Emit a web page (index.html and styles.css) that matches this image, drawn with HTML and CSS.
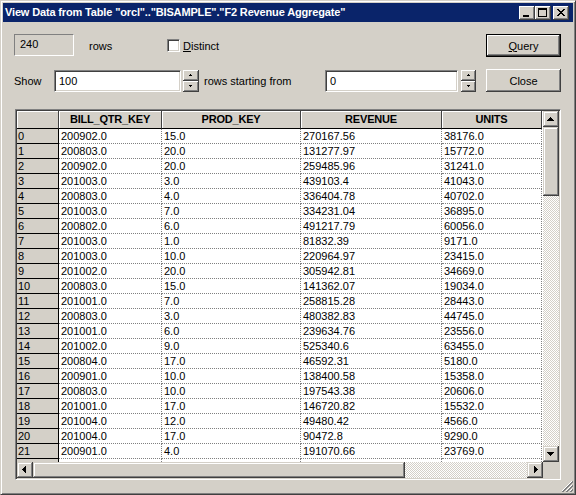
FILE: index.html
```html
<!DOCTYPE html>
<html>
<head>
<meta charset="utf-8">
<title>View Data</title>
<link rel="stylesheet" href="styles.css">
</head>
<body>
<div class="window">
  <div class="titlebar">
    <span class="title">View Data from Table "orcl".."BISAMPLE"."F2 Revenue Aggregate"</span>
    <div class="tbtns">
      <span class="tbtn"><svg width="16" height="14" viewBox="0 0 16 14"><rect x="4" y="9" width="6" height="2" fill="#000"/></svg></span>
      <span class="tbtn"><svg width="16" height="14" viewBox="0 0 16 14"><path d="M3 2h9v9H3z M4 4v6h7V4z" fill="#000" fill-rule="evenodd"/></svg></span>
      <span class="tbtn close"><svg width="16" height="14" viewBox="0 0 16 14"><path d="M4 3h2v1h1v1h2V4h1V3h2v1h-1v1h-1v1h-1v1h1v1h1v1h1v1h-2V9H9V8H7v1H6v1H4V9h1V8h1V7h1V6H6V5H5V4H4z" fill="#000"/></svg></span>
    </div>
  </div>

  <div class="controls">
    <div class="row">
      <div class="static">240</div>
      <span class="lbl-rows">rows</span>
      <span class="check"></span>
      <span class="chk-label"><u>D</u>istinct</span>
      <span class="spacer"></span>
      <div class="btn default"><span><u>Q</u>uery</span></div>
    </div>
    <div class="row">
      <span class="lbl-show">Show</span>
      <div class="field f1">100</div>
      <div class="spin s1">
        <span class="sp"><svg width="16" height="11" viewBox="0 0 16 11"><path d="M7 4h1v1h1v1H6V5h1z" fill="#000"/></svg></span>
        <span class="sp"><svg width="16" height="11" viewBox="0 0 16 11"><path d="M6 4h3v1H8v1H7V5H6z" fill="#000"/></svg></span>
      </div>
      <span class="lbl-from">rows starting from</span>
      <div class="field f2">0</div>
      <div class="spin s2">
        <span class="sp"><svg width="15" height="11" viewBox="0 0 15 11"><path d="M7 4h1v1h1v1H6V5h1z" fill="#000"/></svg></span>
        <span class="sp"><svg width="15" height="11" viewBox="0 0 15 11"><path d="M6 4h3v1H8v1H7V5H6z" fill="#000"/></svg></span>
      </div>
      <span class="spacer"></span>
      <div class="btn"><span>Close</span></div>
    </div>
  </div>

  <div class="frame">
    <div class="viewport">
      <div class="grid">
        <div class="hc"></div><div class="hc">BILL_QTR_KEY</div><div class="hc">PROD_KEY</div><div class="hc">REVENUE</div><div class="hc">UNITS</div>
        <div class="rh">0</div><div class="c">200902.0</div><div class="c">15.0</div><div class="c">270167.56</div><div class="c">38176.0</div>
        <div class="rh">1</div><div class="c">200803.0</div><div class="c">20.0</div><div class="c">131277.97</div><div class="c">15772.0</div>
        <div class="rh">2</div><div class="c">200902.0</div><div class="c">20.0</div><div class="c">259485.96</div><div class="c">31241.0</div>
        <div class="rh">3</div><div class="c">201003.0</div><div class="c">3.0</div><div class="c">439103.4</div><div class="c">41043.0</div>
        <div class="rh">4</div><div class="c">200803.0</div><div class="c">4.0</div><div class="c">336404.78</div><div class="c">40702.0</div>
        <div class="rh">5</div><div class="c">201003.0</div><div class="c">7.0</div><div class="c">334231.04</div><div class="c">36895.0</div>
        <div class="rh">6</div><div class="c">200802.0</div><div class="c">6.0</div><div class="c">491217.79</div><div class="c">60056.0</div>
        <div class="rh">7</div><div class="c">201003.0</div><div class="c">1.0</div><div class="c">81832.39</div><div class="c">9171.0</div>
        <div class="rh">8</div><div class="c">201003.0</div><div class="c">10.0</div><div class="c">220964.97</div><div class="c">23415.0</div>
        <div class="rh">9</div><div class="c">201002.0</div><div class="c">20.0</div><div class="c">305942.81</div><div class="c">34669.0</div>
        <div class="rh">10</div><div class="c">200803.0</div><div class="c">15.0</div><div class="c">141362.07</div><div class="c">19034.0</div>
        <div class="rh">11</div><div class="c">201001.0</div><div class="c">7.0</div><div class="c">258815.28</div><div class="c">28443.0</div>
        <div class="rh">12</div><div class="c">200803.0</div><div class="c">3.0</div><div class="c">480382.83</div><div class="c">44745.0</div>
        <div class="rh">13</div><div class="c">201001.0</div><div class="c">6.0</div><div class="c">239634.76</div><div class="c">23556.0</div>
        <div class="rh">14</div><div class="c">201002.0</div><div class="c">9.0</div><div class="c">525340.6</div><div class="c">63455.0</div>
        <div class="rh">15</div><div class="c">200804.0</div><div class="c">17.0</div><div class="c">46592.31</div><div class="c">5180.0</div>
        <div class="rh">16</div><div class="c">200901.0</div><div class="c">10.0</div><div class="c">138400.58</div><div class="c">15358.0</div>
        <div class="rh">17</div><div class="c">200803.0</div><div class="c">10.0</div><div class="c">197543.38</div><div class="c">20606.0</div>
        <div class="rh">18</div><div class="c">201001.0</div><div class="c">17.0</div><div class="c">146720.82</div><div class="c">15532.0</div>
        <div class="rh">19</div><div class="c">201004.0</div><div class="c">12.0</div><div class="c">49480.42</div><div class="c">4566.0</div>
        <div class="rh">20</div><div class="c">201004.0</div><div class="c">17.0</div><div class="c">90472.8</div><div class="c">9290.0</div>
        <div class="rh">21</div><div class="c">200901.0</div><div class="c">4.0</div><div class="c">191070.66</div><div class="c">23769.0</div>
        <div class="rh"></div><div class="c"></div><div class="c"></div><div class="c"></div><div class="c"></div>
      </div>
    </div>
    <div class="vscroll">
      <span class="sbtn"><svg width="16" height="16" viewBox="0 0 16 16"><path d="M7 6h1v1h1v1h1v1h1v1H4V9h1V8h1V7h1z" fill="#000"/></svg></span>
      <span class="thumb vthumb"></span>
      <span class="track"></span>
      <span class="sbtn"><svg width="16" height="16" viewBox="0 0 16 16"><path d="M4 6h7v1h-1v1h-1v1h-1v1H7V9H6V8H5V7H4z" fill="#000"/></svg></span>
    </div>
    <div class="hscroll">
      <span class="sbtn"><svg width="16" height="16" viewBox="0 0 16 16"><path d="M8 4h1v7h-1v-1h-1v-1h-1v-1h-1v-1h1v-1h1v-1h1z" fill="#000"/></svg></span>
      <span class="thumb hthumb"></span>
      <span class="track"></span>
      <span class="sbtn"><svg width="16" height="16" viewBox="0 0 16 16"><path d="M7 4h1v1h1v1h1v1h1v1h-1v1h-1v1h-1v1h-1z" fill="#000"/></svg></span>
    </div>
    <div class="corner"></div>
  </div>

  <div class="footer">
    <svg class="grip" width="12" height="12" viewBox="0 0 12 12">
      <path d="M11 1L1 11M11 5L5 11M11 9L9 11" stroke="#fff" stroke-width="1"/>
      <path d="M12 1L1 12M12 2L2 12M12 5L5 12M12 6L6 12M12 9L9 12M12 10L10 12" stroke="#808080" stroke-width="1"/>
    </svg>
  </div>
</div>
</body>
</html>
```

FILE: styles.css
```css
html, body {
  margin: 0;
  padding: 0;
  background: #d4d0c8;
}

body {
  font-family: "Liberation Sans", Arial, sans-serif;
  font-size: 11px;
  color: #000;
}

.window {
  width: 576px;
  height: 495px;
  box-sizing: border-box;
  border: 1px solid;
  border-color: #d4d0c8 #404040 #404040 #d4d0c8;
  box-shadow: inset 1px 1px #fff, inset -1px -1px #808080;
  padding: 2px;
  background: #d4d0c8;
  display: flex;
  flex-direction: column;
}

/* title bar */
.titlebar {
  height: 19px;
  background: #0a246a;
  display: flex;
  align-items: center;
  justify-content: space-between;
  padding: 0 4px 0 2px;
  flex: none;
}

.title {
  color: #fff;
  font-weight: bold;
  font-size: 11px;
  letter-spacing: -0.15px;
  line-height: 19px;
  white-space: nowrap;
}

.tbtns {
  display: flex;
  align-items: center;
}

.tbtn {
  width: 16px;
  height: 14px;
  background: #d4d0c8;
  box-shadow: inset -1px -1px #404040, inset 1px 1px #fff, inset -2px -2px #808080;
  display: block;
}

.tbtn svg {
  display: block;
}

.tbtn.close {
  margin-left: 2px;
}

/* controls */
.controls {
  padding: 12px 12px 0 11px;
  display: flex;
  flex-direction: column;
  gap: 12px;
  flex: none;
}

.row {
  height: 23px;
  display: flex;
  align-items: center;
}

.static {
  width: 60px;
  height: 22px;
  box-sizing: border-box;
  border: 1px solid;
  border-color: #808080 #fff #fff #808080;
  padding: 3px 0 0 5px;
  align-self: flex-start;
}

.lbl-rows {
  margin-left: 15px;
  width: 78px;
}

.check {
  width: 13px;
  height: 13px;
  box-sizing: border-box;
  background: #fff;
  border: 1px solid;
  border-color: #808080 #fff #fff #808080;
  box-shadow: inset 1px 1px #404040, inset -1px -1px #d4d0c8;
}

.chk-label {
  margin-left: 3px;
}

.spacer {
  flex: 1;
}

.btn {
  width: 75px;
  height: 23px;
  box-sizing: border-box;
  background: #d4d0c8;
  box-shadow: inset -1px -1px #404040, inset 1px 1px #fff, inset -2px -2px #808080;
  display: flex;
  align-items: center;
  justify-content: center;
  flex: none;
}

.btn.default {
  border: 1px solid #000;
}

.lbl-show {
  width: 40px;
}

.field {
  height: 22px;
  box-sizing: border-box;
  background: #fff;
  border: 1px solid;
  border-color: #808080 #fff #fff #808080;
  box-shadow: inset 1px 1px #404040, inset -1px -1px #d4d0c8;
  padding-left: 4px;
  line-height: 20px;
  flex: none;
}

.f1 { width: 127px; }
.f2 { width: 133px; }

.spin {
  display: flex;
  flex-direction: column;
  height: 22px;
  flex: none;
}

.s1 { width: 16px; margin-left: 2px; }
.s2 { width: 15px; margin-left: 3px; }

.sp {
  height: 11px;
  background: #d4d0c8;
  box-shadow: inset -1px -1px #404040, inset 1px 1px #fff, inset -2px -2px #808080;
  display: block;
}

.sp svg { display: block; }

.lbl-from {
  margin-left: 5px;
  width: 121px;
}

/* table frame */
.frame {
  margin: 17px 0 0 12px;
  width: 546px;
  height: 371px;
  box-sizing: border-box;
  border: 1px solid;
  border-color: #808080 #fff #fff #808080;
  box-shadow: inset 1px 1px #404040, inset -1px -1px #d4d0c8;
  padding: 1px;
  display: grid;
  grid-template-columns: 526px 16px;
  grid-template-rows: 351px 16px;
  flex: none;
}

.viewport {
  overflow: hidden;
  background: #fff;
}

.grid {
  display: grid;
  grid-template-columns: 42px 103px 139px 141px 100px;
  grid-template-rows: 18px;
  grid-auto-rows: 15px;
}

.hc {
  background: #d4d0c8;
  box-sizing: border-box;
  border-right: 1px solid #404040;
  border-bottom: 1px solid #000;
  box-shadow: inset 1px 1px #fff;
  font-weight: bold;
  letter-spacing: -0.2px;
  text-align: center;
  line-height: 17px;
  white-space: nowrap;
  overflow: hidden;
}

.rh {
  background: #d4d0c8;
  box-sizing: border-box;
  border-right: 1px solid #000;
  border-bottom: 1px solid #000;
  padding-left: 1px;
  line-height: 14px;
}

.c {
  box-sizing: border-box;
  border-right: 1px dotted #808080;
  border-bottom: 1px dotted #808080;
  padding-left: 2px;
  line-height: 14px;
  white-space: nowrap;
  overflow: hidden;
}

/* scrollbars */
.vscroll {
  display: flex;
  flex-direction: column;
}

.hscroll {
  display: flex;
}

.sbtn {
  width: 16px;
  height: 16px;
  flex: none;
  display: block;
  background: #d4d0c8;
  box-shadow: inset -1px -1px #404040, inset 1px 1px #d4d0c8, inset -2px -2px #808080, inset 2px 2px #fff;
}

.sbtn svg { display: block; }

.thumb {
  display: block;
  flex: none;
  background: #d4d0c8;
  box-shadow: inset -1px -1px #404040, inset 1px 1px #d4d0c8, inset -2px -2px #808080, inset 2px 2px #fff;
}

.vthumb { height: 69px; }
.hthumb { width: 372px; }

.track {
  flex: 1;
  display: block;
  background: repeating-conic-gradient(#d4d0c8 0 25%, #fff 0 50%) 0 0 / 2px 2px;
}

.corner {
  background: #d4d0c8;
}

.footer {
  flex: 1;
  display: flex;
  justify-content: flex-end;
  align-items: flex-end;
}

.grip {
  display: block;
}
```
